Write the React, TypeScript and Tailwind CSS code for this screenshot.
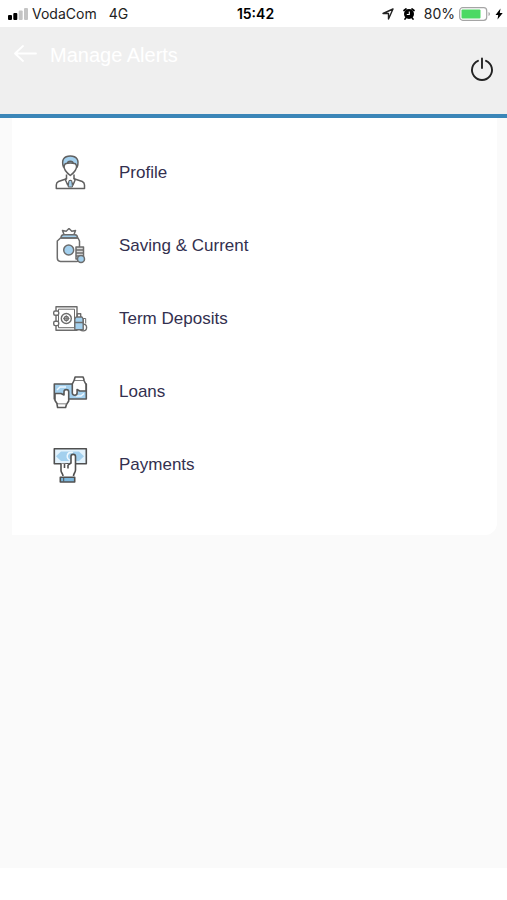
import type { ReactNode } from 'react';

interface MenuItem {
  label: string;
  icon: ReactNode;
}

const BLUE = '#a3d0ee';

function ProfileIcon() {
  return (
    <svg viewBox="0 1 36 36" className="h-9 w-9" fill="none" stroke="#606060" strokeWidth="1.5" strokeLinejoin="round" aria-hidden="true">
      <path d="M12 12c-.3 3.500 3 7 6.300 9.500 3.300-2.500 6.600-6 6.300-9.500" />
      <path d="M11.500 13C9 6 12 2 18.300 2S27.600 6 25.200 13l-1.700-3.200c-3.500-1.200-7-1.200-10.300 0z" fill={BLUE} />
      <path d="M15.500 9.500c0-3 5.600-3 5.600 0" />
      <path d="M14.500 20.500v4.300L6.500 27.500c-1.700.8-2.200 2-2.200 3.500v3.500h28.200V31c0-1.500-.6-2.700-2.200-3.500l-8.300-2.700v-4.300" />
      <path d="M14.500 24l-1 2 2.200 5 2.600-4.500 2.700 4.500 2.100-5-1-2" />
      <path d="M17 26.500h2.700L20.500 33h-4.300z" fill={BLUE} strokeWidth="1" />
    </svg>
  );
}

function SavingIcon() {
  return (
    <svg viewBox="0 1 36 36" className="h-9 w-9" fill="none" stroke="#6c6c6c" strokeWidth="1.500" strokeLinejoin="round" aria-hidden="true">
      <path d="M12 7.500l-1.500-4 3.700.7L17 1.500l2.800 2.700 3.700-.7-1.500 4" />
      <path d="M9 11c0-2 .7-3.300 2.500-3.300h11.500c1.800 0 2.500 1.300 2.500 3.300z" fill={BLUE} />
      <path d="M8.500 11h17.500l1.500 3v17a3 3 0 0 1-3 3.500H8.500A3.500 3.500 0 0 1 5.300 31V14z" />
      <circle cx="16.700" cy="23" r="5" fill={BLUE} />
      <path d="M24 20h7.500v12H24zM24 23h7.500M24 26h7.500M24 29h7.500" fill="#ddd" />
      <circle cx="29" cy="32" r="3.500" fill={BLUE} />
    </svg>
  );
}

function DepositIcon() {
  return (
    <svg viewBox="0 1 36 36" className="h-9 w-9" fill="none" stroke="#6c6c6c" strokeWidth="1.400" strokeLinejoin="round" aria-hidden="true">
      <rect x="4" y="6.700" width="21" height="23.500" />
      <rect x="6.500" y="9.200" width="16" height="18.500" strokeWidth="1" />
      <rect x="1.700" y="11" width="5" height="4.300" rx="1.500" fill="#fff" />
      <rect x="1.700" y="21.300" width="5" height="4.300" rx="1.500" fill="#fff" />
      <circle cx="14.300" cy="18.500" r="5" />
      <circle cx="14.300" cy="18.500" r="2" />
      <path d="M14.300 15.200v6.600M11 18.500h6.600" strokeWidth=".8" />
      <circle cx="31.200" cy="27.500" r="3.400" fill="#fff" />
      <path d="M24 17h6l1.200 2v10.700h-8.400V19z" fill={BLUE} />
      <path d="M25.300 17v-3.200h3.400V17M23 22.500h8" />
      <path d="M31.200 23.500V18.500h2.500v5" strokeWidth="1" />
    </svg>
  );
}

function LoanIcon() {
  return (
    <svg viewBox="0 1 36 36" className="h-9 w-9" fill="none" stroke="#585858" strokeWidth="1.600" strokeLinejoin="round" aria-hidden="true">
      <rect x="2.300" y="11" width="32" height="15" fill={BLUE} />
      <path d="M5 17l3-3h6M24 23h5l3-2.500" stroke="#eef8ff" strokeWidth="1.500" />
      <path d="M20.300 20V11l2-4h9.400l2.300 4.500v6.500h-6.300l-2.600-1.500V20c0 2.900-4.800 2.900-4.800 0z" fill="#fff" />
      <path d="M22.300 7l.8-3h8l1 3" fill="#fff" />
      <path d="M16.700 18.800V28l-2 3.200H5.500L3 27.500v-7h6l3 1.500v-3.200c0-2.900 4.700-2.900 4.700 0z" fill="#fff" />
      <path d="M5 31.200l.6 3.300h8l.9-3.300" fill="#fff" />
    </svg>
  );
}

function PaymentIcon() {
  return (
    <svg viewBox="0 1 36 36" className="h-9 w-9" fill="none" stroke="#505050" strokeWidth="1.600" strokeLinejoin="round" aria-hidden="true">
      <rect x="2.300" y="2.700" width="32" height="15" fill="#e2f2fc" />
      <path d="M4 10.200l5-4.700h18l5 4.700-5 4.800H9z" fill={BLUE} stroke="none" />
      <path d="M21 6.500c-6.500-2-8 7-2 8" stroke="#eef8ff" strokeWidth="1.500" />
      <path d="M9 17.500v7c0 2.500 2 3 2 5.500h10.500c0-2.500 2-3.500 2-6V10.500c0-2.900-4.500-2.900-4.500 0v6l-3 1.500z" fill="#fff" stroke="none" />
      <path d="M9 17.500v7c0 2.500 2 3 2 5.500M21.500 30c0-2.500 2-3.500 2-6V10.500c0-2.900-4.500-2.900-4.500 0v6.500l-3 2M12.500 18v4M16 19v3.500" />
      <path d="M8.300 36v-4.700h14.400V36z" fill="#7db7dc" />
      <path d="M11.700 31.500v4" strokeWidth="1" />
    </svg>
  );
}

const menuItems: MenuItem[] = [
  { label: 'Profile', icon: <ProfileIcon /> },
  { label: 'Saving & Current', icon: <SavingIcon /> },
  { label: 'Term Deposits', icon: <DepositIcon /> },
  { label: 'Loans', icon: <LoanIcon /> },
  { label: 'Payments', icon: <PaymentIcon /> },
];

function StatusBar() {
  return (
    <div className="grid h-[27px] grid-cols-[1fr_auto_1fr] items-center bg-white pl-2 pr-1 font-['Inter',sans-serif] text-[14px] leading-5 text-[#222]">
      <div className="flex items-center gap-1">
        <svg viewBox="0 0 20 12" className="h-3 w-5" aria-hidden="true">
          <rect x="0" y="7" width="4" height="5" rx="1" fill="#000" />
          <rect x="5.300" y="5" width="4" height="7" rx="1" fill="#000" />
          <rect x="10.700" y="2.500" width="4" height="9.500" rx="1" fill="#c4c4c4" />
          <rect x="16" y="0" width="4" height="12" rx="1" fill="#c4c4c4" />
        </svg>
        <span>VodaCom</span>
        <span className="ml-2">4G</span>
      </div>
      <span className="font-semibold text-black">15:42</span>
      <div className="flex items-center justify-end gap-1">
        <svg viewBox="0 0 12 12" className="h-3 w-3" fill="none" stroke="#222" strokeWidth="1.400" strokeLinejoin="round" aria-hidden="true">
          <path d="M11 1L1 5.500h5.500V11z" />
        </svg>
        <svg viewBox="0 0 14 14" className="mx-1 h-[14px] w-[14px]" aria-hidden="true">
          <circle cx="7" cy="7" r="5" fill="#000" />
          <path d="M2 3.500l2-1.500M12 3.500l-2-1.500M3.800 11l-.8 1M10.200 11l.8 1" stroke="#000" strokeWidth="1.700" strokeLinecap="round" />
          <path d="M7.300 4.500v3H4.800" stroke="#fff" strokeWidth="1.100" fill="none" />
        </svg>
        <span>80%</span>
        <svg viewBox="0 0 32 14" className="h-[14px] w-8" aria-hidden="true">
          <rect x=".7" y=".7" width="27" height="12.600" rx="3" fill="#fff" stroke="#a5a5a5" strokeWidth="1.200" />
          <rect x="2.500" y="2.500" width="19" height="9" rx="1" fill="#4cd964" />
          <path d="M29.500 5v4c2-.7 2-3.300 0-4z" fill="#a5a5a5" />
        </svg>
        <svg viewBox="0 0 8 12" className="h-3 w-2" aria-hidden="true">
          <path d="M5.500.5L.5 7h2.700L2.500 11.500 7.700 5H4.800z" fill="#000" />
        </svg>
      </div>
    </div>
  );
}

export default function App() {
  return (
    <div className="flex min-h-screen flex-col bg-white font-['Liberation_Sans',Arial,sans-serif]">
      <StatusBar />

      <header className="flex h-[91px] items-start justify-between border-b-4 border-[#3b86b8] bg-[#efefef] pl-[14px] pr-3">
        <div className="flex items-center gap-3 pt-4">
          <button type="button" aria-label="Back">
            <svg viewBox="0 0 24 20" className="h-5 w-6" fill="none" stroke="#fff" strokeWidth="1.800" strokeLinecap="round" strokeLinejoin="round" aria-hidden="true">
              <path d="M22 8.500H1M9 1L1 8.500l8 7.500" />
            </svg>
          </button>
          <h1 className="text-[20px] leading-6 text-white">Manage Alerts</h1>
        </div>
        <button type="button" aria-label="Log out" className="mt-[30px]">
          <svg viewBox="0 0 26 26" className="h-[26px] w-[26px]" fill="none" stroke="#222" strokeWidth="1.900" strokeLinecap="round" aria-hidden="true">
            <path d="M13 1.500v9.500M9 3.800a10 10 0 1 0 8 0" />
          </svg>
        </button>
      </header>

      <main className="flex-1 bg-[#fafafa] pl-3 pr-[10px]">
        <nav className="rounded-br-xl bg-white pt-[18px] pb-[34px]">
          <ul>
            {menuItems.map((item) => (
              <li key={item.label}>
                <a href="#" className="flex h-[73px] items-center gap-[31px] pl-10 text-[17px] leading-6 text-[#33304f]">
                  {item.icon}
                  {item.label}
                </a>
              </li>
            ))}
          </ul>
        </nav>
      </main>

      <div className="h-8 bg-white" />
    </div>
  );
}
